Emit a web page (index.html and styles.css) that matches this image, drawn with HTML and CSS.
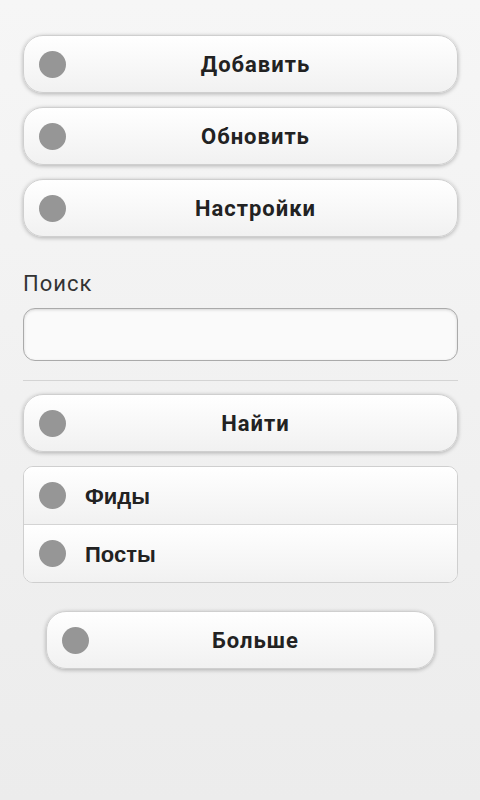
FILE: index.html
```html
<!DOCTYPE html>
<html lang="ru">
<head>
<meta charset="utf-8">
<link rel="stylesheet" href="styles.css">
</head>
<body>
<div class="page">
  <div class="btn"><span class="dot"></span><span class="label">Добавить</span></div>
  <div class="btn"><span class="dot"></span><span class="label">Обновить</span></div>
  <div class="btn"><span class="dot"></span><span class="label">Настройки</span></div>
  <div class="field">
    <div class="field-label">Поиск</div>
    <div class="input"></div>
  </div>
  <div class="divider"></div>
  <div class="btn"><span class="dot"></span><span class="label">Найти</span></div>
  <div class="list">
    <div class="item"><span class="dot"></span><span class="item-label">Фиды</span></div>
    <div class="item"><span class="dot"></span><span class="item-label">Посты</span></div>
  </div>
  <div class="more-wrap">
    <div class="btn more"><span class="dot"></span><span class="label">Больше</span></div>
  </div>
</div>
</body>
</html>
```
FILE: styles.css
```css
html, body {
  margin: 0;
  padding: 0;
  height: 100%;
}
body {
  background: linear-gradient(#f6f6f6, #ececec);
  font-family: Roboto, "Liberation Sans", sans-serif;
  color: #222;
}
.page {
  padding: 35px 22px 0 23px;
  display: flex;
  flex-direction: column;
}
.btn {
  box-sizing: border-box;
  height: 58px;
  border: 1px solid #cfcfcf;
  border-radius: 20px;
  background: linear-gradient(#ffffff, #f1f1f1);
  box-shadow: 0 1px 4px rgba(0,0,0,0.28);
  display: flex;
  align-items: center;
  position: relative;
  margin-bottom: 14px;
}
.dot {
  width: 27px;
  height: 27px;
  border-radius: 50%;
  background: #969696;
  flex: none;
}
.btn .dot {
  position: absolute;
  left: 15px;
  top: 15px;
}
.btn .label {
  flex: 1;
  text-align: center;
  padding-left: 30px;
  font-size: 22px;
  font-weight: bold;
  letter-spacing: 1px;
  color: #222;
  line-height: 28px;
  padding-top: 1px;
}
.field {
  margin-top: 19px;
}
.field-label {
  font-size: 22px;
  letter-spacing: 1px;
  color: #333;
  line-height: 28px;
  margin-bottom: 10px;
}
.input {
  box-sizing: border-box;
  height: 53px;
  border: 1px solid #aaa;
  border-radius: 12px;
  background: #fafafa;
  box-shadow: inset 0 1px 3px rgba(0,0,0,0.15);
}
.divider {
  height: 1px;
  background: #d4d4d4;
  margin: 19px 0 13px;
}
.list {
  border: 1px solid #cfcfcf;
  border-radius: 10px;
  overflow: hidden;
  background: #fff;
  margin-bottom: 28px;
}
.item {
  height: 57px;
  display: flex;
  align-items: center;
  padding-left: 15px;
  background: linear-gradient(#ffffff, #f1f1f1);
}
.item + .item {
  border-top: 1px solid #d4d4d4;
}
.item-label {
  margin-left: 19px;
  font-family: "Liberation Sans", Arial, sans-serif;
  font-size: 22px;
  font-weight: bold;
  color: #222;
  padding-top: 2px;
}
.more-wrap {
  padding: 0 23px;
}
.more-wrap .more {
  margin-bottom: 0;
}
```
